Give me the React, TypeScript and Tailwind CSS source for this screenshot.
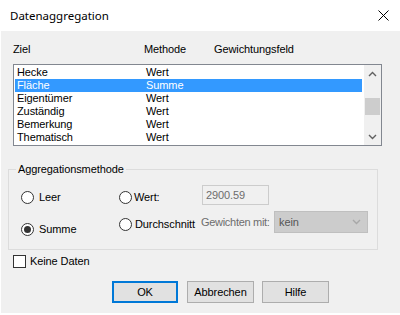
import React from "react";

const rows = [
  { ziel: "Hecke", methode: "Wert" },
  { ziel: "Fläche", methode: "Summe", selected: true },
  { ziel: "Eigentümer", methode: "Wert" },
  { ziel: "Zuständig", methode: "Wert" },
  { ziel: "Bemerkung", methode: "Wert" },
  { ziel: "Thematisch", methode: "Wert" },
];

function Radio({ checked }: { checked?: boolean }) {
  return (
    <span className="flex h-[13px] w-[13px] shrink-0 items-center justify-center rounded-full border border-[#333333] bg-white">
      {checked && <span className="h-[7px] w-[7px] rounded-full bg-[#333333]" />}
    </span>
  );
}

function Chevron({ up, color }: { up?: boolean; color: string }) {
  return (
    <svg width="9" height="6" viewBox="0 0 9 6">
      <path
        d={up ? "M1 5 L4.5 1.5 L8 5" : "M1 1 L4.5 4.5 L8 1"}
        fill="none"
        stroke={color}
        strokeWidth="1.4"
      />
    </svg>
  );
}

export default function App() {
  return (
    <div
      className="flex h-[315px] w-[400px] flex-col overflow-hidden bg-white text-[11px] leading-[13px] tracking-[-0.1px] text-black"
      style={{ fontFamily: '"Liberation Sans", Arial, sans-serif' }}
    >
      {/* Title bar */}
      <div className="flex h-[31px] shrink-0 items-center justify-between pl-[10px] pr-[11px]">
        <span className="text-[11.5px] tracking-normal" style={{ fontFamily: '"Noto Sans", sans-serif' }}>
          Datenaggregation
        </span>
        <svg width="11" height="11" viewBox="0 0 11 11">
          <path d="M0.5 0.5 L10.5 10.5 M10.5 0.5 L0.5 10.5" stroke="#000" strokeWidth="1" />
        </svg>
      </div>

      {/* Body */}
      <div className="ml-px mb-[2px] flex flex-1 flex-col bg-[#f0f0f0]">
        {/* Column headers */}
        <div className="ml-[12px] mt-[12px] flex h-[13px]">
          <span className="w-[131px]">Ziel</span>
          <span className="w-[70px]">Methode</span>
          <span>Gewichtungsfeld</span>
        </div>

        {/* List */}
        <div className="ml-[12px] mt-[8px] flex h-[82px] w-[369px] border border-[#828790] bg-white">
          <div className="w-[348px] pl-px pt-px">
            {rows.map((r) => (
              <div
                key={r.ziel}
                className={`flex h-[13px] pl-[2px] ${r.selected ? "bg-[#3399ff] text-white" : ""}`}
              >
                <span className="w-[129px]">{r.ziel}</span>
                <span>{r.methode}</span>
              </div>
            ))}
          </div>
          <div className="ml-auto flex w-[17px] flex-col items-center bg-[#f0f0f0]">
            <div className="flex h-[17px] items-center justify-center">
              <Chevron up color="#606060" />
            </div>
            <div className="mt-[16px] h-[17px] w-[15px] bg-[#cdcdcd]" />
            <div className="mt-auto flex h-[17px] items-center justify-center">
              <Chevron color="#606060" />
            </div>
          </div>
        </div>

        {/* Group box */}
        <div className="ml-[7px] mt-[23px] flex h-[81px] w-[370px] flex-col border border-[#dcdcdc]">
          <span className="-mt-[7px] ml-[7px] w-fit bg-[#f0f0f0] px-[2px]">Aggregationsmethode</span>

          <div className="mt-[9px] flex items-start pl-[12px]">
            <label className="mt-[6px] flex h-[13px] w-[98px] items-center gap-[5px]">
              <Radio />
              <span>Leer</span>
            </label>
            <label className="mt-[6px] flex h-[13px] w-[83px] items-center gap-[2px]">
              <Radio />
              <span>Wert:</span>
            </label>
            <div className="flex h-[20px] w-[67px] items-center border border-[#cccccc] bg-[#f0f0f0] pl-[3px] text-[#6d6d6d]">
              2900.59
            </div>
          </div>

          <div className="mt-[6px] flex items-start pl-[12px]">
            <label className="mt-[12px] flex h-[13px] w-[98px] items-center gap-[5px]">
              <Radio checked />
              <span>Summe</span>
            </label>
            <label className="mt-[7px] flex h-[13px] w-[82px] items-center gap-[3px]">
              <Radio />
              <span>Durchschnitt</span>
            </label>
            <span className="mt-[5px] w-[73px] tracking-[-0.3px] text-[#6d6d6d]">Gewichten mit:</span>
            <div className="flex h-[22px] w-[94px] items-center justify-between border border-[#bfbfbf] bg-[#cccccc] pl-[4px] pr-[6px] text-[#555555]">
              <span>kein</span>
              <Chevron color="#a8a8a8" />
            </div>
          </div>
        </div>

        {/* Checkbox */}
        <label className="ml-[12px] mt-[5px] flex h-[13px] items-center gap-[4px]">
          <span className="h-[13px] w-[13px] border border-[#333333] bg-white" />
          <span>Keine Daten</span>
        </label>

        {/* Buttons */}
        <div className="ml-[111px] mt-[13px] flex">
          <button className="h-[22px] w-[66px] border-2 border-[#0078d7] bg-[#e1e1e1]">OK</button>
          <button className="ml-[9px] h-[22px] w-[67px] border border-[#adadad] bg-[#e1e1e1]">
            Abbrechen
          </button>
          <button className="ml-[8px] h-[22px] w-[67px] border border-[#adadad] bg-[#e1e1e1]">
            Hilfe
          </button>
        </div>
      </div>
    </div>
  );
}
